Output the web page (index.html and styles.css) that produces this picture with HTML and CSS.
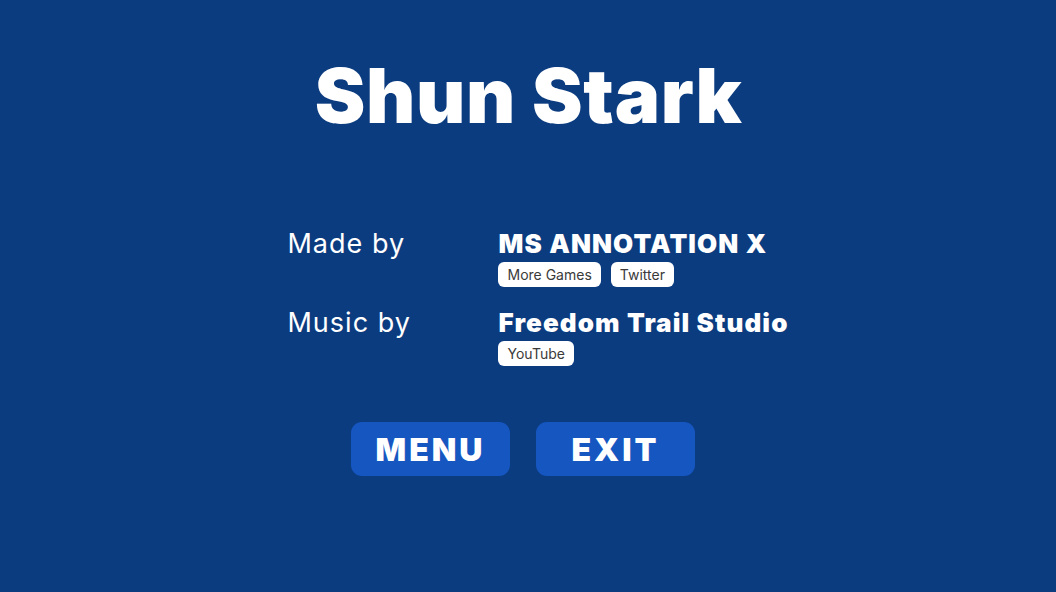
FILE: index.html
```html
<!DOCTYPE html>
<html lang="en">
<head>
<meta charset="utf-8">
<title>Shun Stark - Credits</title>
<link rel="stylesheet" href="styles.css">
</head>
<body>
<main class="screen">
  <h1 class="title">Shun Stark</h1>
  <section class="credits">
    <div class="label">Made by</div>
    <div class="entry">
      <div class="name">MS ANNOTATION X</div>
      <div class="links">
        <a class="tag" href="#">More Games</a>
        <a class="tag" href="#">Twitter</a>
      </div>
    </div>
    <div class="label">Music by</div>
    <div class="entry">
      <div class="name">Freedom Trail Studio</div>
      <div class="links">
        <a class="tag" href="#">YouTube</a>
      </div>
    </div>
  </section>
  <nav class="actions">
    <button class="btn">MENU</button>
    <button class="btn">EXIT</button>
  </nav>
</main>
</body>
</html>
```
FILE: styles.css
```css
html, body {
  margin: 0;
  padding: 0;
  height: 100%;
}
body {
  background: #0c3c80;
  color: #ffffff;
  font-family: "Inter", "Open Sans", sans-serif;
}
.screen {
  display: flex;
  flex-direction: column;
  align-items: center;
  padding-top: 50px;
}
.title {
  margin: 0;
  font-size: 76px;
  font-weight: 900;
  line-height: 90px;
  letter-spacing: 0.7px;
  margin-left: 1px;
}
.credits {
  display: grid;
  grid-template-columns: 211px auto;
  row-gap: 20px;
  margin-top: 88px;
  margin-left: 20px;
}
.label {
  font-size: 27px;
  font-weight: 400;
  line-height: 32px;
  letter-spacing: 1px;
}
.entry {
  display: flex;
  flex-direction: column;
  gap: 2px;
}
.name {
  font-size: 26px;
  font-weight: 900;
  line-height: 32px;
  letter-spacing: 1.1px;
}
.links {
  display: flex;
  gap: 10px;
}
.tag {
  background: #ffffff;
  color: #3a3a3a;
  text-decoration: none;
  font-size: 14px;
  line-height: 25px;
  height: 25px;
  padding: 0 9px;
  border-radius: 6px;
}
.actions {
  display: flex;
  gap: 26px;
  margin-top: 56px;
  margin-left: -10px;
}
.btn {
  width: 159px;
  height: 54px;
  border: none;
  border-radius: 11px;
  background: #1656c1;
  color: #ffffff;
  font-family: "Inter", "Open Sans", sans-serif;
  font-size: 32px;
  font-weight: 900;
  letter-spacing: 3px;
  cursor: pointer;
}
```
